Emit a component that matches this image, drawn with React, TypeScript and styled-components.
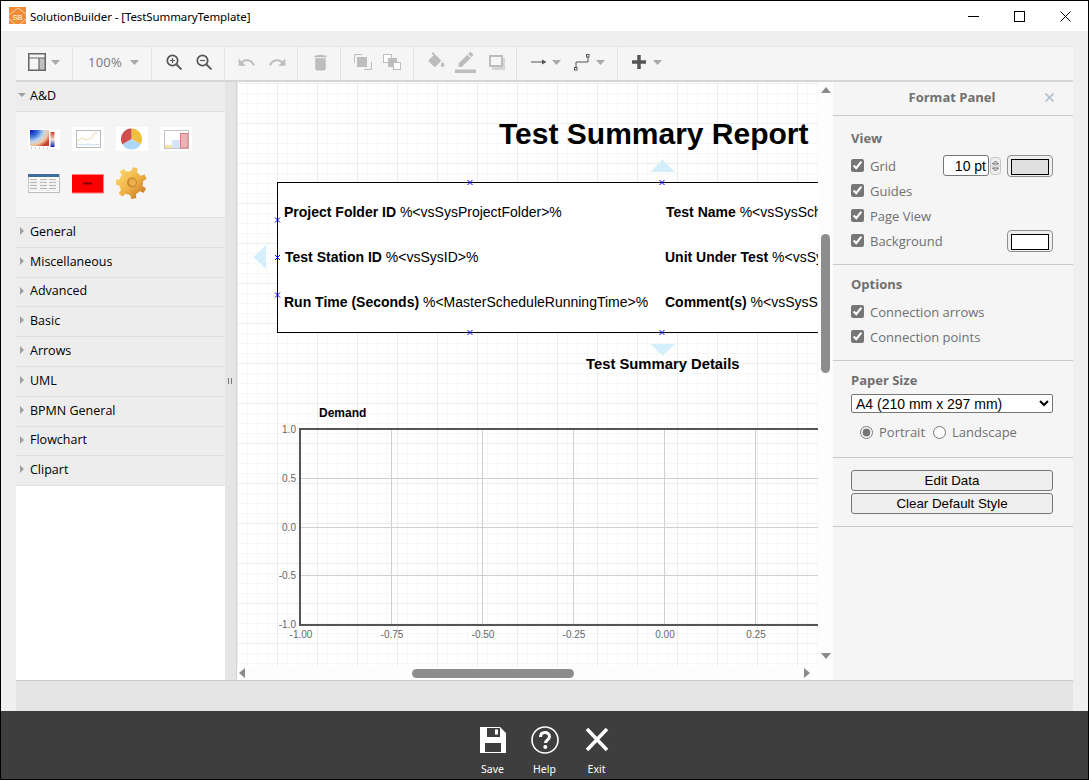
import React from 'react';
import styled, { createGlobalStyle } from 'styled-components';

const Global = createGlobalStyle`
  html, body { margin: 0; padding: 0; background: #fff; }
  * { box-sizing: border-box; }
`;

const UI = `"Open Sans", "Noto Sans", sans-serif`;
const ARIAL = `"Liberation Sans", Arial, sans-serif`;

const Win = styled.div`
  width: 1089px; height: 780px; border: 1px solid #000; display: flex; flex-direction: column;
  background: #efefef; overflow: hidden; font-family: ${UI};
`;
const TitleBar = styled.header`
  height: 30px; background: #fff; display: flex; align-items: center; flex: none; padding-left: 8px;
`;
const TitleText = styled.span`
  font-size: 11.5px; color: #000; margin-left: 4px; flex: 1; white-space: nowrap; font-family: "Noto Sans", sans-serif; letter-spacing: -0.1px;
`;
const WinButton = styled.div`
  width: 46px; height: 30px; display: flex; align-items: center; justify-content: center;
`;
const Workspace = styled.div`
  flex: 1; min-height: 0; display: flex; flex-direction: column; padding: 15px 15px 0;
`;
const Toolbar = styled.div`
  height: 36px; flex: none; display: flex; background: #f5f5f5; border-top: 1px solid #e4e4e4; border-bottom: 2px solid #d6d6d6;
`;
const ToolGroup = styled.div<{ $w?: number; $pad: number }>`
  ${p => (p.$w ? `width: ${p.$w}px;` : 'flex: 1;')}
  padding-left: ${p => p.$pad}px; padding-bottom: 3px; display: flex; align-items: center;
  ${p => (p.$w ? 'border-right: 1px solid #e2e2e2;' : '')}
`;
const ZoomLabel = styled.span`
  font-size: 13px; color: #777; width: 42px; letter-spacing: 0.2px;
`;
const ToolIcon = styled.svg<{ $mr?: number }>`
  flex: none; display: block; margin-right: ${p => p.$mr ?? 0}px;
`;
const Main = styled.div`
  height: 598px; flex: none; display: flex;
`;
const Sidebar = styled.aside`
  width: 209px; background: #fff; flex: none;
`;
const SectionHead = styled.div<{ $h?: number }>`
  height: ${p => p.$h ?? 30}px; background: #ededed; border-bottom: 1px solid #e0e0e0; display: flex; align-items: center;
  padding: 0 0 3px 2px; font-size: 12.5px; color: #000;
`;
const HeadLabel = styled.span`
  margin-left: 2px;
`;
const Palette = styled.div`
  background: #f5f5f5; border-bottom: 1px solid #e0e0e0; height: 106px; padding: 11px 0 0 12px;
  display: grid; grid-template-columns: repeat(4, 32px); grid-auto-rows: 32px; gap: 12px; align-content: start;
`;
const Thumb = styled.svg`
  display: block; width: 32px; height: 32px;
`;
const Splitter = styled.div`
  width: 12px; flex: none; background: #e5e5e5; border-right: 1px solid #d4d4d4; display: flex; justify-content: center; padding-top: 296px; padding-right: 2px;
`;
const Grip = styled.div`
  width: 4px; height: 6px; border-left: 1px solid #777; border-right: 1px solid #777;
`;
const CanvasPane = styled.div`
  width: 596px; flex: none; background: #fdfdfd; display: grid; grid-template-columns: 581px 15px; grid-template-rows: 584px 14px;
`;
const Viewport = styled.div`
  position: relative; overflow: hidden; background-color: #fff;
  background-image:
    linear-gradient(#ececec 1px, transparent 1px),
    linear-gradient(90deg, #ececec 1px, transparent 1px),
    linear-gradient(#f7f7f7 1px, transparent 1px),
    linear-gradient(90deg, #f7f7f7 1px, transparent 1px);
  background-size: 40px 40px, 40px 40px, 10px 10px, 10px 10px;
  background-position: 0 1px, 0 0, 0 1px, 0 0;
  font-family: ${ARIAL};
`;
const ReportTitle = styled.div`
  position: absolute; left: 262px; top: 35px; font-size: 30px; line-height: 34px; font-weight: 700; white-space: nowrap; color: #000;
`;
const InfoBox = styled.div`
  position: absolute; left: 40px; top: 100px; width: 700px; height: 151px; border: 1px solid #000; background: #fff;
`;
const Field = styled.div<{ $x: number; $y: number }>`
  position: absolute; left: ${p => p.$x}px; top: ${p => p.$y}px; font-size: 14px; line-height: 16px; white-space: nowrap; color: #000;
`;
const SubTitle = styled(Field)`
  font-weight: 700; font-size: 14.8px;
`;
const ChartTitle = styled(Field)`
  font-weight: 700; font-size: 12px;
`;
const Overlay = styled.svg`
  position: absolute; left: 0; top: 0; width: 581px; height: 584px; pointer-events: none;
`;
const VLane = styled.div`
  display: flex; flex-direction: column; align-items: center; grid-row: 1 / 3; grid-column: 2; padding: 5px 0 21px;
`;
const VThumb = styled.div`
  width: 9px; height: 139px; border-radius: 5px; background: #8d8d8d; margin-top: 141px; margin-left: -1px;
`;
const Spacer = styled.div`
  flex: 1;
`;
const HLane = styled.div`
  display: flex; align-items: center; padding: 0 8px 0 2px; grid-row: 2; grid-column: 1;
`;
const HThumb = styled.div`
  width: 162px; height: 9px; border-radius: 5px; background: #8d8d8d; margin-left: 167px;
`;
const FormatPanel = styled.section`
  width: 240px; flex: none; background: #f5f5f5;
`;
const PanelHead = styled.div`
  height: 34px; padding: 0 2px 3px 0; display: flex; align-items: center; justify-content: center; position: relative; border-bottom: 1px solid #c8c8c8;
  font-size: 13px; font-weight: 700; color: #707070;
`;
const CloseX = styled.svg`
  position: absolute; right: 19px; top: 11px;
`;
const PanelSection = styled.div<{ $top: number; $bottom: number }>`
  padding: ${p => p.$top}px 20px ${p => p.$bottom}px 18px; border-bottom: 1px solid #c8c8c8;
`;
const SectionLabel = styled.div<{ $mb?: number }>`
  font-size: 13px; line-height: 16px; font-weight: 700; color: #707070; margin-bottom: ${p => p.$mb ?? 7}px;
`;
const CheckRow = styled.label`
  height: 25px; display: flex; align-items: center; font-size: 13px; color: #707070;
`;
const Check = styled.input.attrs({ type: 'checkbox' })`
  width: 13px; height: 13px; margin: 0 6px 0 0; accent-color: #767676;
`;
const SizeInput = styled.input`
  width: 46px; height: 21px; margin-left: auto; border: 1px solid #767676; border-radius: 3px; background: #fff; padding: 0 2px 0 0;
  font: 14px ${ARIAL}; color: #000; text-align: right;
`;
const Spin = styled.svg`
  flex: none; margin-left: 1px;
`;
const Swatch = styled.div<{ $fill: string }>`
  width: 46px; height: 22px; border: 1px solid #8f8f8f; border-radius: 4px; background: #efefef; padding: 3px; margin-left: 6px;
  &::after { content: ''; display: block; height: 100%; border: 1px solid #000; background: ${p => p.$fill}; }
`;
const PushRight = styled(Swatch)`
  margin-left: auto;
`;
const PaperSelect = styled.select`
  width: 202px; height: 19px; display: block; font: 14px ${ARIAL}; color: #000; background: #fff; border: 1px solid #767676; border-radius: 2px; padding: 0;
`;
const RadioRow = styled.div`
  height: 20px; margin-top: 9px; padding-left: 9px; display: flex; align-items: center; font-size: 13px; color: #707070;
`;
const Radio = styled.input.attrs({ type: 'radio' })`
  width: 13px; height: 13px; margin: 0 6px 0 0; accent-color: #767676;
`;
const RadioLabel = styled.span<{ $mr?: number }>`
  margin-right: ${p => p.$mr ?? 0}px;
`;
const PanelButton = styled.button`
  display: block; width: 202px; height: 21px; padding: 0; border: 1px solid #767676; border-radius: 3px; background: #efefef;
  font: 13.33px ${ARIAL}; color: #000;
  & + & { margin-top: 2px; }
`;
const StatusBar = styled.div`
  flex: 1; background: #e5e5e5; border-top: 1px solid #c8c8c8;
`;
const BottomBar = styled.footer`
  height: 68px; flex: none; background: #3e3e3e; display: flex; justify-content: center; padding-top: 14px;
`;
const BarButton = styled.div`
  width: 52px; display: flex; flex-direction: column; align-items: center; color: #fff; font-size: 10.5px; line-height: 14px; font-family: "Noto Sans", sans-serif;
`;
const BarIcon = styled.svg`
  display: block; width: 30px; height: 30px; margin-bottom: 7px;
`;

const Caret = ({ mr = 0 }: { mr?: number }) => (
  <ToolIcon $mr={mr} width="9" height="5" viewBox="0 0 9 5"><path d="M0 0h9L4.5 5z" fill="#a8a8a8" /></ToolIcon>
);
const SideArrow = ({ open }: { open?: boolean }) => (
  <svg width="10" height="10" viewBox="0 0 10 10" style={{ flex: 'none' }}>
    {open ? <path d="M0 3h8L4 7z" fill="#a0a0a0" /> : <path d="M2 1l4 4-4 4z" fill="#a0a0a0" />}
  </svg>
);
const Mat = ({ d, size, color, mr }: { d: string; size: number; color: string; mr?: number }) => (
  <ToolIcon $mr={mr} width={size} height={size} viewBox="0 0 24 24"><path d={d} fill={color} /></ToolIcon>
);

const Handle = ({ x, y }: { x: number; y: number }) => (
  <path d={`M${x - 2.5} ${y - 2.5}l5 5m0 -5l-5 5`} stroke="#0000ff" strokeWidth="1" fill="none" />
);

function gearPath(cx: number, cy: number, r1: number, r2: number, teeth: number, rot: number) {
  const pts: string[] = [];
  const step = (Math.PI * 2) / teeth;
  for (let i = 0; i < teeth; i++) {
    const a = rot + i * step;
    const seq: [number, number][] = [[r1, a - step * 0.5], [r1, a - step * 0.28], [r2, a - step * 0.17], [r2, a + step * 0.17], [r1, a + step * 0.28]];
    seq.forEach(([r, t]) => pts.push(`${(cx + r * Math.cos(t)).toFixed(2)} ${(cy + r * Math.sin(t)).toFixed(2)}`));
  }
  return 'M' + pts.join('L') + 'Z';
}

const Heatmap = () => (
  <Thumb viewBox="0 0 32 32">
    <defs>
      <radialGradient id="hm" cx="0" cy="0" r="1.2">
        <stop offset="0" stopColor="#0010b0" />
        <stop offset="0.35" stopColor="#3a70d8" />
        <stop offset="0.6" stopColor="#b9d4ee" />
        <stop offset="0.8" stopColor="#f2c8a0" />
        <stop offset="1" stopColor="#c8402c" />
      </radialGradient>
      <linearGradient id="hb" x1="0" y1="0" x2="0" y2="1">
        <stop offset="0" stopColor="#c8402c" />
        <stop offset="0.5" stopColor="#f0e0d0" />
        <stop offset="1" stopColor="#1020b0" />
      </linearGradient>
    </defs>
    <rect x="0" y="6" width="32" height="20" fill="#fff" />
    <rect x="2" y="7" width="19" height="16" fill="url(#hm)" />
    <rect x="22.5" y="9" width="4" height="15" fill="url(#hb)" />
    <path d="M3 25h1M7 25h1M11 25h1M15 25h1M19 25h1" stroke="#999" />
  </Thumb>
);
const LineThumb = () => (
  <Thumb viewBox="0 0 32 32">
    <rect x="0" y="4" width="32" height="24" fill="#fff" />
    <rect x="4.5" y="7.5" width="24" height="17" fill="none" stroke="#bbb" />
    <path d="M5 18l5-3 4 2 6-2 2-5 3 0" fill="none" stroke="#efd9a6" />
    <path d="M5 21l6 1 5-1 5 1 7-1" fill="none" stroke="#c9dff2" />
  </Thumb>
);
const PieThumb = () => (
  <Thumb viewBox="0 0 32 32">
    <rect x="0" y="4" width="32" height="24" fill="#fff" />
    <path d="M15.5 16V5.5A10.5 10.5 0 0 1 24.6 21.25z" fill="#f0bf3e" />
    <path d="M15.5 16L24.6 21.25A10.5 10.5 0 0 1 6.4 21.25z" fill="#aed8f8" />
    <path d="M15.5 16L6.4 21.25A10.5 10.5 0 0 1 15.5 5.5z" fill="#cf4f4f" />
  </Thumb>
);
const BarThumb = () => (
  <Thumb viewBox="0 0 32 32">
    <rect x="0" y="4" width="32" height="24" fill="#fff" />
    <rect x="4.5" y="7.5" width="24" height="18" fill="none" stroke="#c4c4c4" />
    <rect x="5" y="22" width="7" height="3" fill="#fbe3a8" />
    <rect x="12" y="17" width="8" height="8" fill="#d3e6f8" />
    <rect x="20.5" y="10.5" width="7.5" height="14.5" fill="#ecb4b8" stroke="#d87c80" />
  </Thumb>
);
const TableThumb = () => (
  <Thumb viewBox="0 0 32 32">
    <rect x="0.5" y="7.5" width="31" height="18" fill="#fff" stroke="#bbb" />
    <rect x="0" y="7" width="31" height="3" fill="#3f6d9e" />
    <path d="M2 12.5h7M12 12.5h7M21 12.5h7M2 15.5h7M12 15.5h7M21 15.5h7M2 18.5h7M12 18.5h7M21 18.5h7M2 21.5h7M12 21.5h7M21 21.5h7" stroke="#b8b8b8" />
    <path d="M0 14h31M0 17h31M0 20h31M0 23h31" stroke="#e4e4e4" />
  </Thumb>
);
const RedThumb = () => (
  <Thumb viewBox="0 0 32 32">
    <rect x="-0.5" y="7.5" width="32" height="18.5" fill="#ff0000" stroke="#ff8080" />
    <rect x="11" y="15.5" width="9" height="2" fill="#800000" />
  </Thumb>
);
const GearThumb = () => (
  <Thumb viewBox="0 0 32 32">
    <defs>
      <linearGradient id="gg" x1="0.1" y1="0.1" x2="0.9" y2="0.9">
        <stop offset="0" stopColor="#fbd76e" />
        <stop offset="0.55" stopColor="#efb245" />
        <stop offset="1" stopColor="#c9792a" />
      </linearGradient>
    </defs>
    <path d={gearPath(15, 16, 12, 16, 7, -1.3)} fill="url(#gg)" />
    <circle cx="16" cy="15.500" r="5" fill="#c78a35" />
    <circle cx="16.500" cy="15.500" r="3.400" fill="#eeb04d" />
  </Thumb>
);

const sections = ['General', 'Miscellaneous', 'Advanced', 'Basic', 'Arrows', 'UML', 'BPMN General', 'Flowchart', 'Clipart'];
const sectionHeights = [30, 30, 29, 30, 30, 30, 30, 29, 30];

const xLabels = [[300, '-1.00'], [391, '-0.75'], [482, '-0.50'], [573, '-0.25'], [664, '0.00'], [755, '0.25']] as const;
const yLabels = [[429, '1.0'], [478, '0.5'], [527, '0.0'], [575, '-0.5'], [624, '-1.0']] as const;

export default function App() {
  return (
    <>
      <Global />
      <Win>
        <TitleBar>
          <svg width="17" height="17" viewBox="0 0 17 17" style={{ flex: 'none', marginTop: -1 }}>
            <rect width="17" height="17" fill="#f28b35" />
            <path d="M0 8L9 1l8 6M0 12l6 5M11 17l6-5" stroke="#fbd5b0" strokeWidth="1" fill="none" />
            <text x="8.5" y="13" textAnchor="middle" fontSize="7.5" fill="#fff" fontFamily={ARIAL}>SB</text>
          </svg>
          <TitleText>SolutionBuilder - [TestSummaryTemplate]</TitleText>
          <WinButton><svg width="11" height="11" viewBox="0 0 11 11"><path d="M0 5.5h11" stroke="#000" /></svg></WinButton>
          <WinButton><svg width="11" height="11" viewBox="0 0 11 11"><rect x="0.5" y="0.5" width="10" height="10" fill="none" stroke="#000" /></svg></WinButton>
          <WinButton><svg width="11" height="11" viewBox="0 0 11 11"><path d="M0.5 0.5l10 10m0-10l-10 10" stroke="#000" fill="none" /></svg></WinButton>
        </TitleBar>
        <Workspace>
          <Toolbar>
            <ToolGroup $w={57} $pad={12}>
              <ToolIcon $mr={5} width="18" height="18" viewBox="0 0 18 18">
                <rect x="11" y="5" width="6" height="12" fill="#c0c0c0" />
                <rect x="0.75" y="0.75" width="16.5" height="16.5" fill="none" stroke="#666" strokeWidth="1.5" />
                <path d="M1 5h16M11 5v12" stroke="#666" strokeWidth="1.2" />
              </ToolIcon>
              <Caret />
            </ToolGroup>
            <ToolGroup $w={79} $pad={15}>
              <ZoomLabel>100%</ZoomLabel>
              <Caret />
            </ToolGroup>
            <ToolGroup $w={73} $pad={14}>
              <ToolIcon $mr={14} width="16" height="16" viewBox="0 0 16 16">
                <circle cx="6.5" cy="6.5" r="5.2" fill="none" stroke="#555" strokeWidth="1.7" />
                <path d="M10.5 10.5L15.5 15.5" stroke="#555" strokeWidth="1.8" />
                <path d="M4 6.5h5M6.5 4v5" stroke="#555" strokeWidth="1.1" />
              </ToolIcon>
              <ToolIcon width="16" height="16" viewBox="0 0 16 16">
                <circle cx="6.5" cy="6.5" r="5.2" fill="none" stroke="#555" strokeWidth="1.7" />
                <path d="M10.5 10.5L15.5 15.5" stroke="#555" strokeWidth="1.8" />
                <path d="M4 6.5h5" stroke="#555" strokeWidth="1.1" />
              </ToolIcon>
            </ToolGroup>
            <ToolGroup $w={73} $pad={12}>
              <Mat mr={12} size={19} color="#bdbdbd" d="M12.5 8c-2.65 0-5.05.99-6.9 2.6L2 7v9h9l-3.62-3.62c1.39-1.16 3.16-1.88 5.12-1.88 3.54 0 6.55 2.31 7.6 5.5l2.37-.78C21.08 11.03 17.15 8 12.5 8z" />
              <Mat size={19} color="#bdbdbd" d="M18.4 10.6C16.55 8.99 14.15 8 11.5 8c-4.65 0-8.58 3.03-9.96 7.22L3.9 16c1.05-3.19 4.05-5.5 7.6-5.5 1.95 0 3.73.72 5.12 1.88L13 16h9V7l-3.6 3.6z" />
            </ToolGroup>
            <ToolGroup $w={43} $pad={12}>
              <Mat size={21} color="#bdbdbd" d="M6 19c0 1.1.9 2 2 2h8c1.1 0 2-.9 2-2V7H6v12zM19 4h-3.5l-1-1h-5l-1 1H5v2h14V4z" />
            </ToolGroup>
            <ToolGroup $w={73} $pad={13}>
              <ToolIcon $mr={10} width="19" height="16" viewBox="0 0 19 16">
                <path d="M0.5 9V0.5H8M10 15.5H17.5V8" fill="none" stroke="#bdbdbd" />
                <rect x="3" y="3" width="10" height="10" fill="#bdbdbd" />
              </ToolIcon>
              <ToolIcon width="19" height="16" viewBox="0 0 19 16">
                <rect x="0.5" y="0.5" width="8" height="8" fill="#fff" stroke="#bdbdbd" />
                <rect x="5" y="4" width="9" height="9" fill="#bdbdbd" />
                <rect x="10.5" y="8.5" width="7" height="7" fill="#fff" stroke="#bdbdbd" />
              </ToolIcon>
            </ToolGroup>
            <ToolGroup $w={103} $pad={12}>
              <Mat mr={8} size={21} color="#bdbdbd" d="M16.56 8.94L7.62 0 6.21 1.41l2.38 2.38-5.15 5.15c-.59.59-.59 1.54 0 2.12l5.5 5.5c.29.29.68.44 1.06.44s.77-.15 1.06-.44l5.5-5.5c.59-.58.59-1.53 0-2.12zM19 11.5s-2 2.17-2 3.5c0 1.1.9 2 2 2s2-.9 2-2c0-1.33-2-3.5-2-3.5z" />
              <Mat mr={13} size={21} color="#bdbdbd" d="M17.75 7L14 3.25l-10 10V17h3.75l10-10zm2.96-2.96c.39-.39.39-1.02 0-1.41L18.37.29c-.39-.39-1.02-.39-1.41 0L15 2.25 18.75 6l1.96-1.96zM0 20h24v4H0z" />
              <ToolIcon width="16" height="15" viewBox="0 0 16 15">
                <rect x="3" y="3" width="13" height="12" fill="#d6d6d6" />
                <rect x="1" y="1" width="12" height="10" fill="#f5f5f5" stroke="#bdbdbd" strokeWidth="2" />
              </ToolIcon>
            </ToolGroup>
            <ToolGroup $w={101} $pad={14}>
              <ToolIcon $mr={5} width="16" height="8" viewBox="0 0 16 8">
                <path d="M0 4h13" stroke="#555" /><path d="M11 1.5L15.5 4 11 6.5z" fill="#555" />
              </ToolIcon>
              <Caret mr={13} />
              <ToolIcon $mr={6} width="16" height="17" viewBox="0 0 16 17">
                <path d="M2 14V8h12V3" fill="none" stroke="#555" />
                <rect x="0.5" y="13.5" width="2.5" height="2.5" fill="#f5f5f5" stroke="#555" />
                <rect x="12.5" y="0.5" width="2.5" height="2.5" fill="#f5f5f5" stroke="#555" />
              </ToolIcon>
              <Caret />
            </ToolGroup>
            <ToolGroup $pad={14}>
              <ToolIcon $mr={7} width="14" height="14" viewBox="0 0 14 14"><path d="M7 0v14M0 7h14" stroke="#555" strokeWidth="3.5" /></ToolIcon>
              <Caret />
            </ToolGroup>
          </Toolbar>
          <Main>
            <Sidebar>
              <SectionHead><SideArrow open /><HeadLabel>A&amp;D</HeadLabel></SectionHead>
              <Palette>
                <Heatmap /><LineThumb /><PieThumb /><BarThumb />
                <TableThumb /><RedThumb /><GearThumb />
              </Palette>
              {sections.map((s, i) => (
                <SectionHead key={s} $h={sectionHeights[i]}><SideArrow /><HeadLabel>{s}</HeadLabel></SectionHead>
              ))}
            </Sidebar>
            <Splitter><Grip /></Splitter>
            <CanvasPane>
              <Viewport>
                <ReportTitle>Test Summary Report</ReportTitle>
                <InfoBox />
                <Field $x={47} $y={122}><b>Project Folder ID</b> %&lt;vsSysProjectFolder&gt;%</Field>
                <Field $x={48} $y={167}><b>Test Station ID</b> %&lt;vsSysID&gt;%</Field>
                <Field $x={47} $y={212}><b>Run Time (Seconds)</b> %&lt;MasterScheduleRunningTime&gt;%</Field>
                <Field $x={429} $y={122}><b>Test Name</b> %&lt;vsSysSchedule&gt;%</Field>
                <Field $x={428} $y={167}><b>Unit Under Test</b> %&lt;vsSysUUT&gt;%</Field>
                <Field $x={428} $y={212}><b>Comment(s)</b> %&lt;vsSysSchedule&gt;%</Field>
                <SubTitle $x={349} $y={274}>Test Summary Details</SubTitle>
                <ChartTitle $x={82} $y={323}>Demand</ChartTitle>
                <Overlay viewBox="237 82 581 584">
                  <path d="M650.5 172L662.5 159.5 675 172z" fill="#d4eefb" />
                  <path d="M650.5 344L662.5 356 675 344z" fill="#d4eefb" />
                  <path d="M266 245L253.500 257 266 269z" fill="#d4eefb" />
                  <Handle x={470} y={182.500} />
                  <Handle x={662} y={182.500} />
                  <Handle x={277.500} y={220} />
                  <Handle x={277.500} y={257.500} />
                  <Handle x={277.500} y={295} />
                  <Handle x={470} y={332.500} />
                  <Handle x={662} y={332.500} />
                  {xLabels.slice(1).map(([x]) => <path key={x} d={`M${x + 0.5} 429V625`} stroke="#cfcfcf" />)}
                  {yLabels.slice(1, 4).map(([y]) => <path key={y} d={`M300 ${y + 0.5}H818`} stroke="#cfcfcf" />)}
                  <path d="M818 429H300V625H818" fill="none" stroke="#555" strokeWidth="2" />
                  {xLabels.map(([x, t]) => <text key={t} x={x + 1} y={638} textAnchor="middle" fontSize="10" fill="#666">{t}</text>)}
                  {yLabels.map(([y, t]) => <text key={t} x={296} y={y + 4} textAnchor="end" fontSize="10" fill="#666">{t}</text>)}
                </Overlay>
              </Viewport>
              <VLane>
                <svg width="10" height="6" viewBox="0 0 10 6" style={{ flex: 'none' }}><path d="M0 6L5 0l5 6z" fill="#8a8a8a" /></svg>
                <VThumb />
                <Spacer />
                <svg width="10" height="6" viewBox="0 0 10 6" style={{ flex: 'none' }}><path d="M0 0l5 6 5-6z" fill="#8a8a8a" /></svg>
              </VLane>
              <HLane>
                <svg width="6" height="10" viewBox="0 0 6 10" style={{ flex: 'none' }}><path d="M6 0L0 5l6 5z" fill="#8a8a8a" /></svg>
                <HThumb />
                <Spacer />
                <svg width="6" height="10" viewBox="0 0 6 10" style={{ flex: 'none' }}><path d="M0 0l6 5-6 5z" fill="#8a8a8a" /></svg>
              </HLane>
            </CanvasPane>
            <FormatPanel>
              <PanelHead>
                Format Panel
                <CloseX width="9" height="9" viewBox="0 0 9 9"><path d="M0.500 0.500l8 8m0-8l-8 8" stroke="#b8c4d0" strokeWidth="1.800" fill="none" /></CloseX>
              </PanelHead>
              <PanelSection $top={14} $bottom={11}>
                <SectionLabel>View</SectionLabel>
                <CheckRow>
                  <Check defaultChecked />Grid
                  <SizeInput defaultValue="10 pt" />
                  <Spin width="11" height="18" viewBox="0 0 11 18">
                    <rect x="0.500" y="0.500" width="10" height="17" rx="3" fill="#efefef" stroke="#c4c4c4" />
                    <path d="M5.500 4l3 3h-6zM5.500 14l3-3h-6z" fill="none" stroke="#666" />
                    <path d="M1 9h9" stroke="#c4c4c4" />
                  </Spin>
                  <Swatch $fill="#e0e0e0" />
                </CheckRow>
                <CheckRow><Check defaultChecked />Guides</CheckRow>
                <CheckRow><Check defaultChecked />Page View</CheckRow>
                <CheckRow><Check defaultChecked />Background<PushRight $fill="#ffffff" /></CheckRow>
              </PanelSection>
              <PanelSection $top={11} $bottom={11}>
                <SectionLabel>Options</SectionLabel>
                <CheckRow><Check defaultChecked />Connection arrows</CheckRow>
                <CheckRow><Check defaultChecked />Connection points</CheckRow>
              </PanelSection>
              <PanelSection $top={11} $bottom={15}>
                <SectionLabel $mb={6}>Paper Size</SectionLabel>
                <PaperSelect defaultValue="a4"><option value="a4">A4 (210 mm x 297 mm)</option></PaperSelect>
                <RadioRow>
                  <Radio name="orient" defaultChecked /><RadioLabel $mr={8}>Portrait</RadioLabel>
                  <Radio name="orient" /><RadioLabel>Landscape</RadioLabel>
                </RadioRow>
              </PanelSection>
              <PanelSection $top={12} $bottom={12}>
                <PanelButton>Edit Data</PanelButton>
                <PanelButton>Clear Default Style</PanelButton>
              </PanelSection>
            </FormatPanel>
          </Main>
          <StatusBar />
        </Workspace>
        <BottomBar>
          <BarButton>
            <BarIcon viewBox="0 0 30 30">
              <path fillRule="evenodd" d="M2 2h20l6 6v20H2zM9 3v9h13V3zM17 4.500h3v5h-3zM7 18v9h16v-9z" fill="#fff" />
            </BarIcon>
            Save
          </BarButton>
          <BarButton>
            <BarIcon viewBox="0 0 30 30">
              <circle cx="15" cy="15" r="13" fill="none" stroke="#fff" strokeWidth="1.600" />
              <path d="M10.500 12c0-3 2-4.500 4.500-4.500s4.500 1.600 4.500 4c0 3.500-4 3.500-4 6.500" fill="none" stroke="#fff" strokeWidth="3" />
              <circle cx="15.300" cy="22" r="2" fill="#fff" />
            </BarIcon>
            Help
          </BarButton>
          <BarButton>
            <BarIcon viewBox="0 0 30 30">
              <path d="M5 4l20 21M25 4L5 25" stroke="#fff" strokeWidth="3.500" fill="none" />
            </BarIcon>
            Exit
          </BarButton>
        </BottomBar>
      </Win>
    </>
  );
}
